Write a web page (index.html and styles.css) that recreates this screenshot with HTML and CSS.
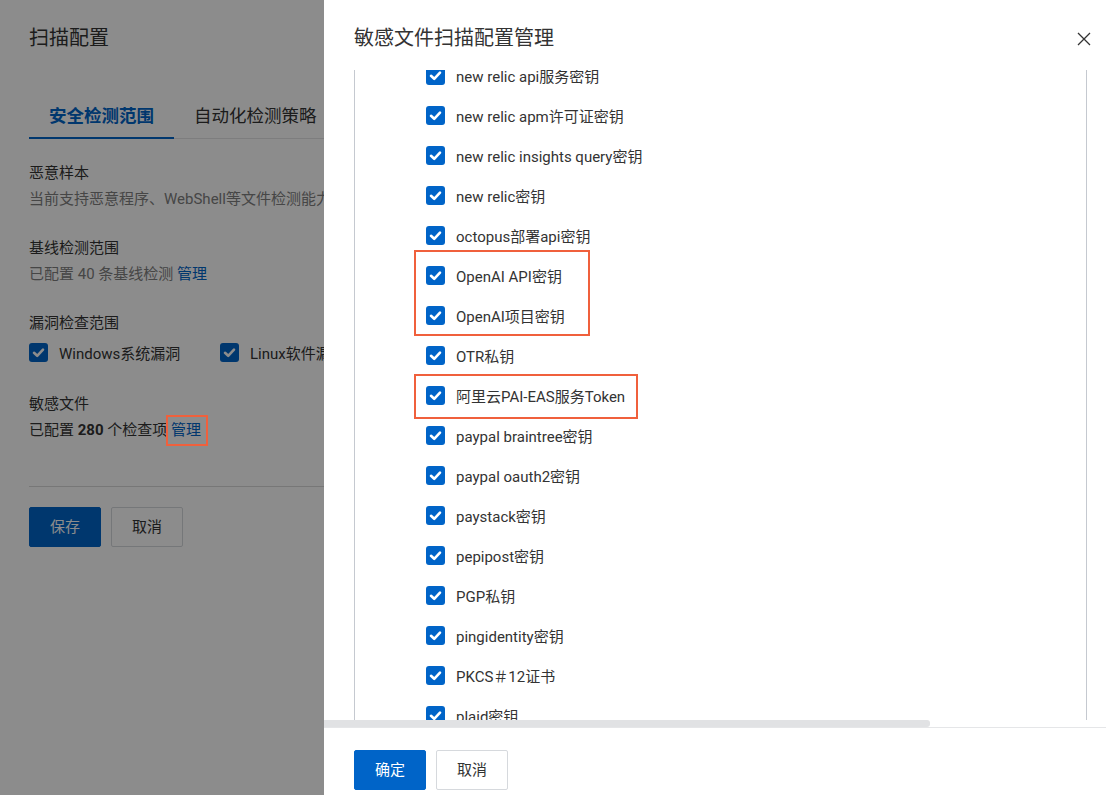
FILE: index.html
```html
<!DOCTYPE html>
<html lang="zh-CN">
<head>
<meta charset="utf-8">
<title>扫描配置</title>
<link rel="stylesheet" href="styles.css">
</head>
<body>

  <div class="page">
    <h1 class="page-title">扫描配置</h1>

    <div class="tabs">
      <div class="tab active">安全检测范围</div>
      <div class="tab">自动化检测策略</div>
    </div>

    <div class="section first">
      <div class="label">恶意样本</div>
      <div class="desc">当前支持恶意程序、WebShell等文件检测能力，默认开启全部检测项</div>
    </div>

    <div class="section">
      <div class="label">基线检测范围</div>
      <div class="desc">已配置 40 条基线检测 <a class="link">管理</a></div>
    </div>

    <div class="section">
      <div class="label">漏洞检查范围</div>
      <div class="check-line">
        <label class="check"><span class="box"></span>Windows系统漏洞</label>
        <label class="check"><span class="box"></span>Linux软件漏洞</label>
        <label class="check"><span class="box"></span>应用漏洞</label>
      </div>
    </div>

    <div class="section">
      <div class="label">敏感文件</div>
      <div class="desc dark">已配置 <b>280</b> 个检查项 <a class="link marked">管理</a></div>
    </div>

    <div class="divider"></div>

    <div class="actions">
      <button class="btn primary">保存</button>
      <button class="btn">取消</button>
    </div>
  </div>

  <div class="mask"></div>

  <div class="drawer">
    <div class="drawer-header">
      <div class="drawer-title">敏感文件扫描配置管理</div>
      <svg class="close" width="14" height="14" viewBox="0 0 14 14">
        <path d="M1 1 L13 13 M13 1 L1 13" stroke="#333" stroke-width="1.3" fill="none"/>
      </svg>
    </div>

    <div class="drawer-body">
      <div class="scroll-view">
        <div class="tree">
          <div class="row"><span class="cb"></span>new relic api服务密钥</div>
          <div class="row"><span class="cb"></span>new relic apm许可证密钥</div>
          <div class="row"><span class="cb"></span>new relic insights query密钥</div>
          <div class="row"><span class="cb"></span>new relic密钥</div>
          <div class="row"><span class="cb"></span>octopus部署api密钥</div>
          <div class="mark mark-openai">
            <div class="row"><span class="cb"></span>OpenAI API密钥</div>
            <div class="row"><span class="cb"></span>OpenAI项目密钥</div>
          </div>
          <div class="row"><span class="cb"></span>OTR私钥</div>
          <div class="mark mark-pai">
            <div class="row"><span class="cb"></span>阿里云PAI-EAS服务Token</div>
          </div>
          <div class="row"><span class="cb"></span>paypal braintree密钥</div>
          <div class="row"><span class="cb"></span>paypal oauth2密钥</div>
          <div class="row"><span class="cb"></span>paystack密钥</div>
          <div class="row"><span class="cb"></span>pepipost密钥</div>
          <div class="row"><span class="cb"></span>PGP私钥</div>
          <div class="row"><span class="cb"></span>pingidentity密钥</div>
          <div class="row"><span class="cb"></span>PKCS＃12证书</div>
          <div class="row"><span class="cb"></span>plaid密钥</div>
          <div class="row"><span class="cb"></span>postman密钥</div>
        </div>
      </div>
      <div class="hbar"><div class="thumb"></div></div>
    </div>

    <div class="drawer-footer">
      <button class="btn primary">确定</button>
      <button class="btn">取消</button>
    </div>
  </div>

</body>
</html>
```

FILE: styles.css
```css
html, body {
  margin: 0;
  padding: 0;
  height: 100%;
}

body {
  background: #fff;
  font-family: Roboto, "Noto Sans CJK SC", sans-serif;
  font-size: 15px;
  color: #333;
  overflow: hidden;
}

/* underlying page */

.page {
  padding: 24px 30px 0 29px;
  width: 1106px;
  box-sizing: border-box;
  white-space: nowrap;
}

.page-title {
  margin: 0;
  font-size: 20px;
  font-weight: normal;
  line-height: 28px;
  color: #333;
}

.tabs {
  margin-top: 43px;
  display: flex;
  border-bottom: 1px solid #e3e4e6;
  width: 295px;
}

.tab {
  padding: 0 20px;
  height: 43px;
  line-height: 42px;
  font-size: 17.5px;
  color: #333;
  position: relative;
}

.tab.active {
  color: #0064c8;
  font-weight: bold;
}

.tab.active::after {
  content: "";
  position: absolute;
  left: 0;
  right: 0;
  bottom: -1px;
  height: 2px;
  background: #0064c8;
}

.section {
  margin-top: 23px;
}

.section.first {
  margin-top: 21px;
}

.label {
  line-height: 26px;
  color: #333;
}

.desc {
  line-height: 26px;
  color: #808080;
}

.desc.dark {
  color: #333;
}

.link {
  color: #0064c8;
}

.marked {
  position: relative;
}

/* annotation frame drawn above the mask */
.marked::after {
  content: "";
  position: absolute;
  left: -5px;
  right: -7px;
  top: -6px;
  bottom: -7px;
  border: 2px solid #f0603c;
  z-index: 20;
}

.check-line {
  display: flex;
  height: 32px;
  align-items: center;
}

.check {
  display: flex;
  align-items: center;
  width: 191px;
}

.box {
  width: 19px;
  height: 19px;
  border-radius: 3px;
  margin-right: 11px;
  background: #0064c8 url("data:image/svg+xml;utf8,<svg xmlns='http://www.w3.org/2000/svg' viewBox='0 0 19 19'><path d='M5 9.8 L8.2 12.8 L14 6.6' stroke='white' stroke-width='2.6' fill='none' stroke-linecap='round' stroke-linejoin='round'/></svg>") no-repeat center;
}

.divider {
  margin-top: 43px;
  height: 1px;
  background: #d9d9d9;
}

.actions {
  margin-top: 20px;
  display: flex;
  gap: 10px;
}

.btn {
  width: 72px;
  height: 40px;
  border: 1px solid #d6d9dd;
  border-radius: 2px;
  background: #fff;
  font-family: inherit;
  font-size: 15px;
  line-height: 20px;
  color: #333;
  padding: 0;
}

.btn.primary {
  background: #0064c8;
  border-color: #0064c8;
  color: #fff;
}

.mask {
  position: fixed;
  inset: 0;
  background: rgba(0, 0, 0, 0.45);
  z-index: 10;
}

/* drawer */

.drawer {
  position: fixed;
  top: 0;
  right: 0;
  width: 782px;
  height: 795px;
  background: #fff;
  z-index: 30;
  display: flex;
  flex-direction: column;
}

.drawer-header {
  height: 70px;
  padding: 0 15px 0 30px;
  display: flex;
  align-items: center;
  justify-content: space-between;
  box-sizing: border-box;
}

.drawer-title {
  font-size: 20px;
  line-height: 28px;
  margin-top: 6px;
  color: #333;
}

.close {
  margin-top: 8px;
}

.drawer-body {
  height: 657px;
  display: flex;
  flex-direction: column;
}

.scroll-view {
  height: 650px;
  overflow: hidden;
  padding: 0 19px 0 30px;
}

.tree {
  margin-top: -15px;
  border-left: 1px solid #c5c9d0;
  border-right: 1px solid #c5c9d0;
  padding-left: 71px;
}

.row {
  height: 40px;
  display: flex;
  align-items: center;
  color: #333;
  white-space: nowrap;
}

.cb {
  width: 19px;
  height: 19px;
  border-radius: 3px;
  margin-right: 11px;
  flex: none;
  background: #0064c8 url("data:image/svg+xml;utf8,<svg xmlns='http://www.w3.org/2000/svg' viewBox='0 0 19 19'><path d='M5 9.8 L8.2 12.8 L14 6.6' stroke='white' stroke-width='2.6' fill='none' stroke-linecap='round' stroke-linejoin='round'/></svg>") no-repeat center;
}

.mark {
  margin-left: -11px;
  padding-left: 11px;
  outline: 2px solid #f0603c;
  outline-offset: -1px;
}

.mark-openai {
  width: 163px;
  margin-top: -4px;
  padding-top: 4px;
}

.mark-pai {
  width: 211px;
  padding-bottom: 3px;
  margin-bottom: -3px;
}

.hbar {
  height: 7px;
  background: #fff;
}

.hbar .thumb {
  width: 606px;
  height: 7px;
  background: #e1e2e4;
  border-radius: 0 3px 3px 0;
}

.drawer-footer {
  flex: 1;
  border-top: 1px solid #e5e6e8;
  padding: 22px 30px 0 30px;
  display: flex;
  gap: 10px;
  align-items: flex-start;
}
```
